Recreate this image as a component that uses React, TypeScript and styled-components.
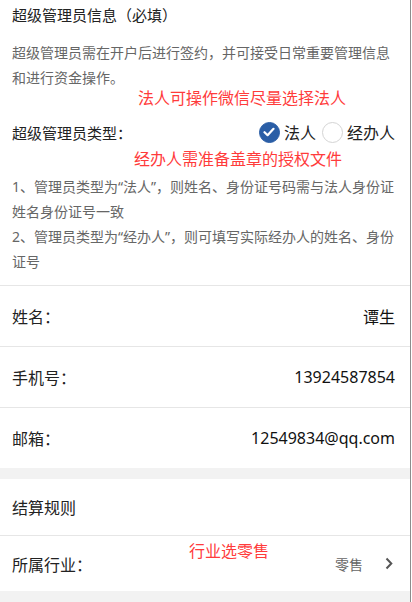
import React, {FC} from 'react';
import styled, {createGlobalStyle} from 'styled-components';

const GlobalStyle = createGlobalStyle`
  html, body {
    margin: 0;
    padding: 0;
    background: #fff;
  }
  body {
    font-family: "Noto Sans", "Noto Sans CJK SC", sans-serif;
    color: #222;
  }
`;

const fields = [
    {label: '姓名：', value: '谭生'},
    {label: '手机号：', value: '13924587854'},
    {label: '邮箱：', value: '12549834@qq.com'},
];

const Radio: FC<{checked?: boolean; label: string}> = ({checked, label}) => (
    <RadioItem>
        <Circle checked={checked}>
            {checked && (
                <svg width="12" height="10" viewBox="0 0 12 10">
                    <path d="M1.5 5.2 L4.6 8.2 L10.5 1.8" fill="none" stroke="#fff" strokeWidth="2.2"
                          strokeLinecap="round" strokeLinejoin="round"/>
                </svg>
            )}
        </Circle>
        <RadioLabel>{label}</RadioLabel>
    </RadioItem>
);

const App: FC = () => {
    return (
        <>
            <GlobalStyle/>
            <Page>
                <Section>
                    <Title>超级管理员信息（必填）</Title>
                    <Hint>超级管理员需在开户后进行签约，并可接受日常重要管理信息和进行资金操作。</Hint>
                    <Remark indent={138} shift={0}>法人可操作微信尽量选择法人</Remark>
                    <TypeRow>
                        <span>超级管理员类型：</span>
                        <RadioGroup>
                            <Radio checked label="法人"/>
                            <Radio label="经办人"/>
                        </RadioGroup>
                    </TypeRow>
                    <Remark indent={134} shift={4}>经办人需准备盖章的授权文件</Remark>
                    <Notes>
                        <p>1、管理员类型为“法人”，则姓名、身份证号码需与法人身份证姓名身份证号一致</p>
                        <p>2、管理员类型为“经办人”，则可填写实际经办人的姓名、身份证号</p>
                    </Notes>
                </Section>

                {fields.map(f => (
                    <FieldRow key={f.label}>
                        <span>{f.label}</span>
                        <Value>{f.value}</Value>
                    </FieldRow>
                ))}

                <Gap/>

                <GroupTitle>结算规则</GroupTitle>
                <SelectRow>
                    <span>所属行业：</span>
                    <Overlay>行业选零售</Overlay>
                    <Picked>
                        零售
                        <svg width="8" height="13" viewBox="0 0 8 13">
                            <path d="M1.5 1.5 L6.3 6.5 L1.5 11.5" fill="none" stroke="#555" strokeWidth="2"/>
                        </svg>
                    </Picked>
                </SelectRow>
                <Gap/>
            </Page>
        </>
    );
};

export default App;

const Page = styled.div`
  width: 410px;
  min-height: 602px;
  border-right: 1px solid #8c8c8c;
  background: #fff;
`;

const Section = styled.div`
  padding: 0 15px 11px 12px;
  border-bottom: 1px solid #e6e6e6;
`;

const Title = styled.div`
  font-size: 15px;
  line-height: 30px;
  color: #222;
`;

const Hint = styled.div`
  margin-top: 10px;
  font-size: 14px;
  line-height: 25px;
  color: #666;
`;

const Remark = styled.div<{indent: number; shift: number}>`
  margin-top: ${p => p.shift}px;
  padding-left: ${p => p.indent - 12}px;
  font-size: 16px;
  line-height: 16px;
  color: #ff3b3b;
`;

const TypeRow = styled.div`
  margin-top: 11px;
  display: flex;
  align-items: center;
  justify-content: space-between;
  height: 30px;
  font-size: 15px;
`;

const RadioGroup = styled.div`
  display: flex;
  align-items: center;
  gap: 6px;
`;

const RadioItem = styled.label`
  display: flex;
  align-items: center;
  gap: 4px;
`;

const Circle = styled.span<{checked?: boolean}>`
  box-sizing: border-box;
  width: 21px;
  height: 21px;
  border-radius: 50%;
  display: flex;
  align-items: center;
  justify-content: center;
  background: ${p => p.checked ? '#2a5ea6' : '#fff'};
  border: 1px solid ${p => p.checked ? '#2a5ea6' : '#d4d4d4'};
`;

const RadioLabel = styled.span`
  font-size: 16px;
  color: #222;
`;

const Notes = styled.div`
  margin-top: 7px;
  font-size: 14px;
  line-height: 25px;
  color: #666;

  p {
    margin: 0;
  }
`;

const FieldRow = styled.div`
  display: flex;
  align-items: center;
  justify-content: space-between;
  height: 60px;
  padding: 0 15px 0 12px;
  font-size: 16px;
  border-bottom: 1px solid #e6e6e6;

  &:nth-of-type(4) {
    border-bottom: none;
  }
`;

const Value = styled.span`
  color: #111;
`;

const Gap = styled.div`
  height: 11px;
  background: #f2f2f2;
`;

const GroupTitle = styled.div`
  height: 56px;
  display: flex;
  align-items: center;
  padding-left: 12px;
  font-size: 16px;
  border-bottom: 1px solid #e6e6e6;
`;

const SelectRow = styled.div`
  position: relative;
  height: 55px;
  display: flex;
  align-items: center;
  justify-content: space-between;
  padding: 0 17px 0 12px;
  font-size: 16px;
`;

const Overlay = styled.span`
  position: absolute;
  left: 189px;
  top: 4px;
  font-size: 16px;
  line-height: 22px;
  color: #ff3b3b;
`;

const Picked = styled.span`
  display: flex;
  align-items: center;
  gap: 22px;
  font-size: 14px;
  color: #666;
`;
